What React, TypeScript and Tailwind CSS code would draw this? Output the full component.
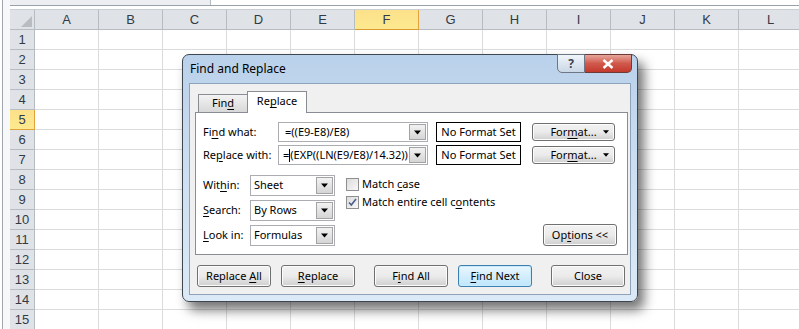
import React from 'react';

const columns = ['A', 'B', 'C', 'D', 'E', 'F', 'G', 'H', 'I', 'J', 'K', 'L'];
const rows = Array.from({ length: 15 }, (_, i) => i + 1);

const U: React.FC<{ children: React.ReactNode }> = ({ children }) => (
  <span className="underline underline-offset-[2px] decoration-1">{children}</span>
);

// small black down arrow used in combos and format buttons
const Caret: React.FC<{ size?: number }> = ({ size = 7 }) => (
  <svg width={size} height={Math.ceil(size / 2) + 1} viewBox="0 0 7 4">
    <path d="M0 0h7L3.5 4z" fill="#000" />
  </svg>
);

const Combo: React.FC<{ width: string; pad: string; children: React.ReactNode }> = ({ width, pad, children }) => (
  <div className={`${width} h-full flex items-stretch bg-white border border-[#abadb3]`}>
    <div className={`flex-1 overflow-hidden whitespace-nowrap flex items-center ${pad}`}>
      <span>{children}</span>
    </div>
    <div className="w-[17px] m-px flex items-center justify-center border border-[#a3a3a3] bg-gradient-to-b from-[#f2f2f2] to-[#d5d5d5]">
      <Caret />
    </div>
  </div>
);

const Button: React.FC<{ className?: string; primary?: boolean; children: React.ReactNode }> = ({ className = '', primary, children }) => (
  <div
    className={`h-[22px] flex items-center justify-center rounded-[3px] border ${
      primary
        ? 'border-[#3c7fb1] bg-gradient-to-b from-[#eaf6fd] to-[#bee6fd] shadow-[inset_0_0_0_1px_#c8ecfc]'
        : 'border-[#707070] bg-gradient-to-b from-[#f2f2f2] via-[#ebebeb] to-[#cfcfcf] shadow-[inset_0_0_0_1px_#fcfcfc]'
    } ${className}`}
  >
    <span>{children}</span>
  </div>
);

const Checkbox: React.FC<{ checked?: boolean }> = ({ checked }) => (
  <div className="w-[13px] h-[13px] border border-[#8f8f8f] bg-gradient-to-br from-[#dcdcdc] to-[#f8f8f8] flex items-center justify-center">
    {checked && (
      <svg width="9" height="9" viewBox="0 0 9 9">
        <path d="M1 4.5l2.3 2.6L8 1" stroke="#4a5f8f" strokeWidth="1.6" fill="none" />
      </svg>
    )}
  </div>
);

const FormatButton: React.FC = () => (
  <Button className="ml-[11px] w-[83px] !h-[18px] relative">
    For<U>m</U>at...
    <span className="absolute right-[5px] top-[6px] flex">
      <Caret size={6} />
    </span>
  </Button>
);

const Dialog: React.FC = () => (
  <div className="absolute left-[182px] top-[54px] w-[456px] h-[248px] rounded-[7px] border border-[#3e4650] bg-gradient-to-b from-[#bad1eb] via-[#cddff2] to-[#dce9f6] shadow-[6px_8px_12px_rgba(0,0,0,0.55)] font-['Noto_Sans',sans-serif] text-[11px] text-black">
    {/* title bar */}
    <div className="h-[28px] flex justify-between pl-[7px] pr-[5px]">
      <div className="pt-[5px] text-[12px]">Find and Replace</div>
      <div className="flex -mt-px h-[19px]">
        <div className="w-[28px] rounded-bl-[5px] border border-[#6d7684] bg-gradient-to-b from-[#f0f5fa] to-[#c9d7e6] flex items-center justify-center text-[12px] font-bold text-[#3b4350]">
          ?
        </div>
        <div className="w-[47px] rounded-br-[5px] border border-l-0 border-[#6d3a36] bg-gradient-to-b from-[#e7a59b] via-[#d0594c] to-[#c2392c] flex items-center justify-center">
          <svg width="12" height="10" viewBox="0 0 12 10">
            <path d="M1.5 1l9 8M10.5 1l-9 8" stroke="#fff" strokeWidth="2.4" />
          </svg>
        </div>
      </div>
    </div>

    {/* client area */}
    <div className="mx-[6px] h-[212px] border border-[#8ea3ba] bg-[#f0f0f0]">
      {/* tabs */}
      <div className="h-[28px] flex items-end pl-[8px]">
        <div className="w-[50px] h-[18px] border border-b-0 border-[#898c95] bg-gradient-to-b from-[#f3f3f3] to-[#d8d8d8] flex items-center justify-center">
          <span>
            Fin<U>d</U>
          </span>
        </div>
        <div className="relative z-10 -ml-px -mb-px w-[60px] h-[22px] border border-b-0 border-[#898c95] bg-white flex items-center justify-center pb-[2px]">
          <span>
            Re<U>p</U>lace
          </span>
        </div>
      </div>

      {/* tab page */}
      <div className="ml-[5px] w-[433px] h-[143px] border border-[#898c95] bg-white">
        <div className="mt-[9px] h-[20px] flex items-center">
          <div className="w-[82px] pl-[7px]">
            Fi<U>n</U>d what:
          </div>
          <Combo width="w-[150px]" pad="pl-[6px]">=((E9-E8)/E8)</Combo>
          <div className="ml-[8px] w-[85px] h-full border border-black flex items-center justify-center">No Format Set</div>
          <FormatButton />
        </div>
        <div className="mt-[3px] h-[20px] flex items-center">
          <div className="w-[82px] pl-[7px]">
            Re<U>p</U>lace with:
          </div>
          <Combo width="w-[150px]" pad="pl-[4px]">
            =<span className="inline-block w-px h-[13px] align-middle bg-black" />(EXP((LN(E9/E8)/14.32))
          </Combo>
          <div className="ml-[8px] w-[85px] h-full border border-black flex items-center justify-center">No Format Set</div>
          <FormatButton />
        </div>

        <div className="mt-[10px] flex">
          <div className="flex flex-col gap-[4px]">
            {[
              [<>Wit<U>h</U>in:</>, 'Sheet'],
              [<><U>S</U>earch:</>, 'By Rows'],
              [<><U>L</U>ook in:</>, 'Formulas'],
            ].map(([label, value], i) => (
              <div key={i} className="h-[21px] flex items-center">
                <div className="w-[54px] pl-[7px]">{label}</div>
                <Combo width="w-[85px]" pad="pl-[3px]">
                  {value}
                </Combo>
              </div>
            ))}
          </div>
          <div className="ml-[11px] pt-[3px] flex flex-col gap-[5px]">
            <div className="flex items-center gap-[3px] h-[13px]">
              <Checkbox />
              <span>
                Match <U>c</U>ase
              </span>
            </div>
            <div className="flex items-center gap-[3px] h-[13px]">
              <Checkbox checked />
              <span>
                Match entire cell c<U>o</U>ntents
              </span>
            </div>
          </div>
          <div className="flex-1 flex items-end justify-end pr-[10px]">
            <Button className="w-[74px]">
              Op<U>t</U>ions &lt;&lt;
            </Button>
          </div>
        </div>
      </div>

      {/* bottom buttons */}
      <div className="mt-[10px] pl-[7px] flex">
        <Button className="w-[74px]">
          Replace <U>A</U>ll
        </Button>
        <Button className="ml-[10px] w-[74px]">
          <U>R</U>eplace
        </Button>
        <Button className="ml-[19px] w-[74px]">
          F<U>i</U>nd All
        </Button>
        <Button primary className="ml-[10px] w-[74px]">
          <U>F</U>ind Next
        </Button>
        <Button className="ml-[19px] w-[74px]">Close</Button>
      </div>
    </div>
  </div>
);

const App: React.FC = () => {
  return (
    <div className="relative w-[799px] h-[329px] overflow-hidden bg-white flex font-['Liberation_Sans',Arial,sans-serif] text-[13px] text-[#333a44]">
      {/* left window edge */}
      <div className="w-[10px] shrink-0 h-full bg-white">
        <div className="ml-[2px] h-full border-l border-[#a0a6ae] bg-[#f7f8f9]" />
      </div>

      <div className="flex-1 flex flex-col">
        {/* formula bar remnant */}
        <div className="h-[6px] shrink-0 flex border-b border-[#9aa1a9]">
          <div className="w-[200px] bg-[#eceef1]" />
          <div className="flex-1 bg-white border-l border-[#b5bbc2]" />
        </div>
        <div className="h-[4px] shrink-0 bg-white border-b border-[#c9ced4]" />

        {/* column headers */}
        <div className="h-[20px] shrink-0 flex">
          <div className="w-[25px] shrink-0 h-full border-r border-b border-[#b7bcc3] bg-[#dfe3e8] relative">
            <svg className="absolute right-[2px] bottom-[2px]" width="11" height="11" viewBox="0 0 11 11">
              <path d="M11 0v11H0z" fill="#b9bdc2" />
            </svg>
          </div>
          {columns.map((c) => (
            <div
              key={c}
              className={`w-[64px] shrink-0 h-full border-r border-b flex items-center justify-center ${
                c === 'F'
                  ? 'bg-gradient-to-b from-[#fbe18a] to-[#fde98f] border-[#e2a23c] border-b-[#d99a2f]'
                  : 'bg-[#dfe3e8] border-[#b7bcc3]'
              }`}
            >
              {c}
            </div>
          ))}
        </div>

        {/* rows */}
        {rows.map((r) => (
          <div key={r} className="h-[20px] flex shrink-0">
            <div
              className={`w-[25px] shrink-0 h-full border-r border-b flex items-center justify-center ${
                r === 5
                  ? 'bg-gradient-to-b from-[#fbe18a] to-[#fde98f] border-[#e2a23c]'
                  : 'bg-[#dfe3e8] border-[#b7bcc3]'
              }`}
            >
              {r}
            </div>
            {columns.map((c) => (
              <div key={c} className="w-[64px] shrink-0 h-full border-r border-b border-[#dadcdd]" />
            ))}
          </div>
        ))}
      </div>

      <Dialog />
    </div>
  );
};

export default App;
